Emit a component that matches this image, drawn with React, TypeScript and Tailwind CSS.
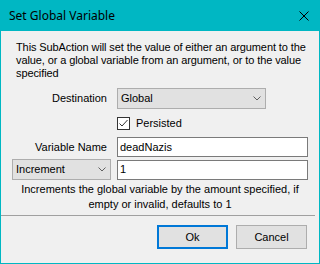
import React from 'react';

const Chevron = () => (
  <svg width="8" height="5" viewBox="0 0 8 5" className="shrink-0">
    <path d="M0.5 0.5 L4 4 L7.5 0.5" fill="none" stroke="#606060" strokeWidth="1" />
  </svg>
);

const Select = ({ value, className }: { value: string; className: string }) => (
  <div
    className={`flex h-[21px] items-center justify-between border border-[#adadad] bg-[#e1e1e1] pl-[3px] pr-[4px] ${className}`}
  >
    <span>{value}</span>
    <Chevron />
  </div>
);

const TextBox = ({ value }: { value: string }) => (
  <div className="flex h-[20px] w-[191px] items-center border border-[#7a7a7a] bg-white pl-[2px]">
    {value}
  </div>
);

export default function App() {
  return (
    <div
      className="flex h-[264px] w-[320px] flex-col text-[11px] text-black"
      style={{ fontFamily: '"Liberation Sans", Arial, sans-serif' }}
    >
      {/* Title bar */}
      <div className="flex h-[31px] shrink-0 items-center justify-between bg-[#00b7c3] pl-[9px] pr-[11px]">
        <span className="text-[12px]" style={{ fontFamily: '"Noto Sans", sans-serif' }}>
          Set Global Variable
        </span>
        <svg width="10" height="10" viewBox="0 0 10 10">
          <path d="M0.5 0.5 L9.5 9.5 M9.5 0.5 L0.5 9.5" stroke="#000" strokeWidth="1" />
        </svg>
      </div>

      {/* Body */}
      <div className="flex flex-1 flex-col border-x border-b border-[#00b7c3] bg-[#f0f0f0]">
        <p className="mt-[10px] pl-[15px] pr-[1px] leading-[13px] tracking-[-0.1px]">
          This SubAction will set the value of either an argument to the value, or a global variable from an
          argument, or to the value specified
        </p>

        <div className="mt-[8px] flex items-center">
          <span className="w-[107px] pr-px text-right">Destination</span>
          <Select value="Global" className="ml-[9px] w-[149px]" />
        </div>

        <div className="mt-[8px] flex h-[13px] items-center pl-[116px]">
          <div className="flex h-[13px] w-[13px] items-center justify-center border border-[#333] bg-white">
            <svg width="11" height="11" viewBox="0 0 11 11">
              <path d="M1.5 5.5 L4 8 L9.5 2" fill="none" stroke="#333" strokeWidth="1" />
            </svg>
          </div>
          <span className="ml-[6px]">Persisted</span>
        </div>

        <div className="mt-[7px] flex items-center">
          <span className="w-[107px] pr-px text-right">Variable Name</span>
          <div className="ml-[9px]">
            <TextBox value="deadNazis" />
          </div>
        </div>

        <div className="mt-[2px] flex items-center pl-[11px]">
          <Select value="Increment" className="w-[99px]" />
          <div className="ml-[6px]">
            <TextBox value="1" />
          </div>
        </div>

        <p className="mt-[2px] px-[20px] text-center leading-[15px]">
          Increments the global variable by the amount specified, if empty or invalid, defaults to 1
        </p>

        <div className="mr-[4px] mt-[3px] h-px bg-[#a0a0a0]" />

        <div className="mt-[9px] flex justify-end gap-[8px] pr-[12px]">
          <button className="h-[24px] w-[71px] border-2 border-[#0078d7] bg-[#e1e1e1]">Ok</button>
          <button className="h-[24px] w-[71px] border border-[#adadad] bg-[#e1e1e1]">Cancel</button>
        </div>
      </div>
    </div>
  );
}
